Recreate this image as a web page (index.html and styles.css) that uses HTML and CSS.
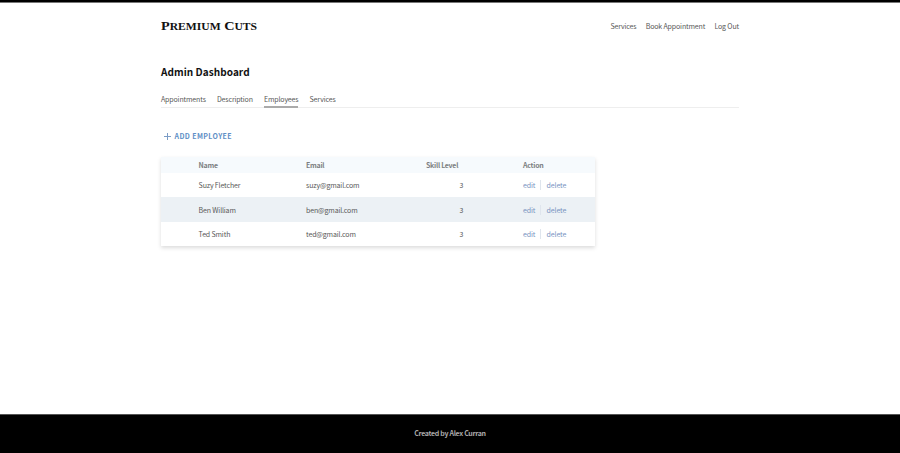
FILE: index.html
```html
<!DOCTYPE html>
<html lang="en">
<head>
<meta charset="utf-8">
<title>Premium Cuts</title>
<link rel="stylesheet" href="styles.css">
</head>
<body>
<div class="container">
  <header class="header">
    <a class="logo">P<span class="small">remium</span> C<span class="small">uts</span></a>
    <nav class="nav"><a class="nav-services">Services</a><a class="nav-book">Book Appointment</a><a class="nav-logout">Log Out</a></nav>
  </header>
  <main>
    <h1 class="title">Admin Dashboard</h1>
    <div class="tabs"><a class="tab">Appointments</a><a class="tab">Description</a><a class="tab active">Employees</a><a class="tab">Services</a></div>
    <button class="add"><svg class="plus" viewBox="0 0 7 7"><path d="M3.5 0v7M0 3.5h7"/></svg><span>Add Employee</span></button>
    <table class="table">
      <colgroup><col class="c-name"><col class="c-email"><col class="c-skill"><col class="c-action"></colgroup>
      <thead><tr><th class="name">Name</th><th>Email</th><th class="skill">Skill Level</th><th>Action</th></tr></thead>
      <tbody>
        <tr><td class="name">Suzy Fletcher</td><td>suzy@gmail.com</td><td class="skill">3</td><td><div class="actions"><a class="edit">edit</a><a>delete</a></div></td></tr>
        <tr><td class="name">Ben William</td><td>ben@gmail.com</td><td class="skill">3</td><td><div class="actions"><a class="edit">edit</a><a>delete</a></div></td></tr>
        <tr><td class="name">Ted Smith</td><td>ted@gmail.com</td><td class="skill">3</td><td><div class="actions"><a class="edit">edit</a><a>delete</a></div></td></tr>
      </tbody>
    </table>
  </main>
</div>
<footer class="footer">Created by Alex Curran</footer>
</body>
</html>
```
FILE: styles.css
```css
* { box-sizing: border-box; }
body {
  margin: 0;
  height: 453px;
  display: flex;
  flex-direction: column;
  border-top: 2px solid #000;
  box-shadow: inset 0 1px #777;
  background: #fff;
  color: #585858;
  font: 7px/10px "Noto Sans CJK JP", "Open Sans", sans-serif;
  letter-spacing: -.14px;
  overflow: hidden;
}
.container { width: 578px; margin-left: 161px; flex: 1; }
.header { display: flex; justify-content: space-between; height: 49px; padding-bottom: 2px; align-items: center; }
.logo {
  font: bold 13.5px/16px "Liberation Serif", serif;
  letter-spacing: 0;
  color: #111;
  transform: scaleX(1.055);
  transform-origin: left;
}
.small { font-size: 11px; text-transform: uppercase; }
.nav { display: flex; gap: 9.2px; }
.title { margin: 13px 0 0; font-size: 10px; line-height: 16px; font-weight: 700; letter-spacing: .06px; color: #111; }
.tabs { display: flex; gap: 11.1px; margin-top: 13px; height: 15px; border-bottom: 1px solid #eee; }
.tab { height: 15px; line-height: 13px; }
.tab.active { border-bottom: 2px solid #aaa; }
.add {
  display: flex;
  align-items: center;
  gap: 4px;
  margin: 23px 0 0 2.5px;
  padding: 0;
  border: 0;
  background: none;
  color: #5f8fc6;
  font: 700 7px/10px "Noto Sans CJK JP", sans-serif;
  letter-spacing: .4px;
  text-transform: uppercase;
}
.plus { width: 7px; height: 7px; fill: none; stroke: #7b9cc6; stroke-width: 1; }
.table {
  width: 434px;
  margin-top: 16px;
  table-layout: fixed;
  border-collapse: collapse;
  box-shadow: 0 2px 4px rgba(0, 0, 0, .14);
}
.c-name { width: 145px; }
.c-email { width: 120px; }
.c-skill { width: 97px; }
th, td { padding: 0; text-align: left; }
th { height: 16px; background: #f6fafd; color: #7c7f82; font-weight: 700; letter-spacing: -.26px; }
td { height: 24.4px; }
tbody tr:nth-child(even) { background: #ecf1f5; }
th.name, td.name { padding-left: 37.6px; }
td.skill { padding-left: 33.5px; }
.actions { display: flex; color: #7893bf; letter-spacing: -.1px; }
.edit { width: 18px; margin-right: 5.5px; border-right: 1px solid #dfe5ed; }
.footer {
  height: 39px;
  border-top: 1px solid #555;
  background: #000;
  color: #aaa;
  font-weight: 700;
  letter-spacing: -.3px;
  line-height: 37px;
  text-align: center;
}
```
